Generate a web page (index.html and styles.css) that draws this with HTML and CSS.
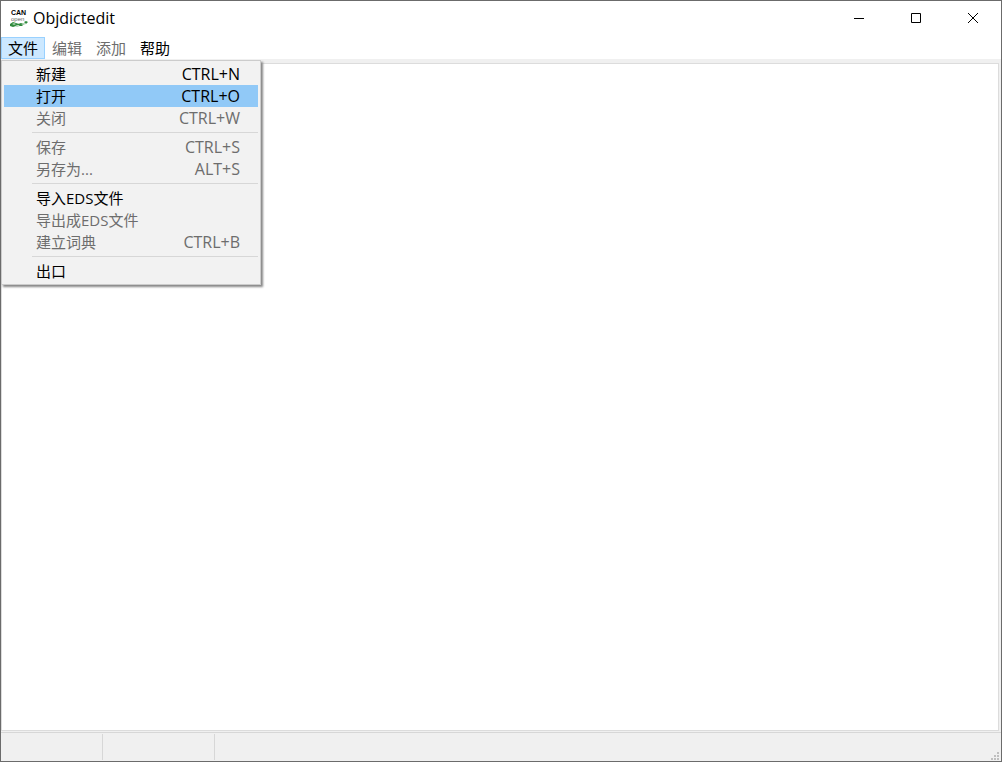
FILE: index.html
```html
<!DOCTYPE html>
<html lang="zh-CN">
  <head>
    <meta charset="UTF-8" />
    <meta name="viewport" content="width=device-width, initial-scale=1.0" />
    <title>Objdictedit</title>
    <link rel="stylesheet" href="styles.css">
  </head>
  <body>
    <div class="window">
      <header class="titlebar">
        <svg class="logo" viewBox="0 0 20 20" aria-hidden="true">
          <text class="logo-can" x="2" y="7">CAN</text>
          <text class="logo-open" x="2" y="13">open</text>
          <path fill="#2f8a3c" d="M1 16l3-2 3 1 3 1-3 2-3 1-3-1zM9 16l3-1 3 1-2 2-3 0zM15 14l2-1 2 1-2 2z" />
          <path fill="#a9cfae" d="M3 16l2-1 2 1-2 1zM6 18l3-1 2 1-3 1zM12 16l3-1 2 1-3 1z" />
        </svg>
        <h1>Objdictedit</h1>
        <div class="window-buttons">
          <button type="button" aria-label="最小化">
            <svg viewBox="0 0 10 10"><path d="M0 5.5h10" /></svg>
          </button>
          <button type="button" aria-label="最大化">
            <svg viewBox="0 0 10 10"><path d="M.5.5h9v9h-9z" /></svg>
          </button>
          <button type="button" aria-label="关闭">
            <svg viewBox="0 0 10 10"><path d="M0 0l10 10M10 0L0 10" /></svg>
          </button>
        </div>
      </header>

      <nav class="menubar">
        <div class="menu">
          <button type="button" class="menu-title open">文件</button>
          <div class="dropdown">
            <button type="button" class="item"><span>新建</span><span class="key">CTRL+N</span></button>
            <button type="button" class="item active"><span>打开</span><span class="key">CTRL+O</span></button>
            <button type="button" class="item" disabled><span>关闭</span><span class="key">CTRL+W</span></button>
            <hr>
            <button type="button" class="item" disabled><span>保存</span><span class="key">CTRL+S</span></button>
            <button type="button" class="item" disabled><span>另存为...</span><span class="key">ALT+S</span></button>
            <hr>
            <button type="button" class="item"><span>导入EDS文件</span></button>
            <button type="button" class="item" disabled><span>导出成EDS文件</span></button>
            <button type="button" class="item" disabled><span>建立词典</span><span class="key">CTRL+B</span></button>
            <hr>
            <button type="button" class="item"><span>出口</span></button>
          </div>
        </div>
        <button type="button" class="menu-title" disabled>编辑</button>
        <button type="button" class="menu-title" disabled>添加</button>
        <button type="button" class="menu-title">帮助</button>
      </nav>

      <main class="client">
        <div class="notebook"></div>
      </main>

      <footer class="statusbar">
        <div class="pane"></div>
        <div class="pane"></div>
        <div class="pane"></div>
        <svg class="grip" viewBox="0 0 8 8" aria-hidden="true">
          <path fill="#bfbfbf" d="M6 0h2v2H6zM3 3h2v2H3zM6 3h2v2H6zM0 6h2v2H0zM3 6h2v2H3zM6 6h2v2H6z" />
        </svg>
      </footer>
    </div>
  </body>
</html>
```
FILE: styles.css
```css
* {
  box-sizing: border-box;
}
body {
  margin: 0;
}
body,
button {
  font-family: "Open Sans", "Noto Sans CJK SC", sans-serif;
  font-size: 15px;
  line-height: 22px;
  color: #000;
}
button {
  border: 0;
  padding: 0;
  background: none;
}
button:disabled {
  color: #6d6d6d;
}
.window {
  display: flex;
  flex-direction: column;
  height: 100vh;
  border: 1px solid #6b6b6b;
  background: #fff;
}

/* title bar */
.titlebar {
  display: flex;
  align-items: center;
  height: 36px;
  padding: 0 0 2px 8px;
}
.logo {
  width: 20px;
  height: 20px;
  margin-right: 4px;
}
.logo-can {
  font: bold 7px "Liberation Sans", sans-serif;
}
.logo-open {
  font: 6px "Liberation Sans", sans-serif;
  fill: #666;
}
h1 {
  margin: 0;
  font-size: 16px;
  font-weight: normal;
}
.window-buttons {
  display: flex;
  height: 100%;
  margin-left: auto;
}
.window-buttons button {
  display: flex;
  align-items: center;
  justify-content: center;
  width: 57px;
}
.window-buttons svg {
  width: 10px;
  height: 10px;
  fill: none;
  stroke: #000;
}

/* menu bar */
.menubar {
  display: flex;
  height: 22px;
}
.menu {
  position: relative;
}
.menu-title {
  height: 22px;
  padding: 0 7px;
  line-height: 20px;
}
.menu-title.open {
  border: 1px solid #99d1ff;
  padding: 0 6px;
  background: #cce8ff;
}
.dropdown {
  position: absolute;
  top: 100%;
  left: 0;
  z-index: 1;
  width: 260px;
  margin-top: 1px;
  padding: 2px;
  border: 1px solid #ccc;
  background: #f2f2f2;
  box-shadow: 2px 2px 2px #888;
}
.item {
  display: flex;
  justify-content: space-between;
  width: 100%;
  height: 22px;
  padding: 0 18px 0 32px;
}
.item.active {
  background: #91c9f7;
}
.key {
  font-size: 16px;
}
.dropdown hr {
  height: 1px;
  margin: 3px 0 3px 28px;
  border: 0;
  background: #d7d7d7;
}

/* client area */
.client {
  display: flex;
  flex: 1;
  padding: 4px 2px 1px 0;
  background: #f0f0f0;
}
.notebook {
  flex: 1;
  border: 1px solid #dcdcdc;
  background: #fff;
}

/* status bar */
.statusbar {
  display: flex;
  height: 29px;
  padding: 1px 2px 1px 0;
  border-top: 1px solid #d7d7d7;
  background: #f0f0f0;
}
.pane {
  flex: 1 1 0;
}
.pane:nth-child(1) {
  flex: 0 0 102px;
  border-right: 1px solid #d7d7d7;
}
.pane:nth-child(2) {
  flex: 0 0 112px;
  border-right: 1px solid #d7d7d7;
}
.grip {
  align-self: flex-end;
  width: 8px;
  height: 8px;
}
```
